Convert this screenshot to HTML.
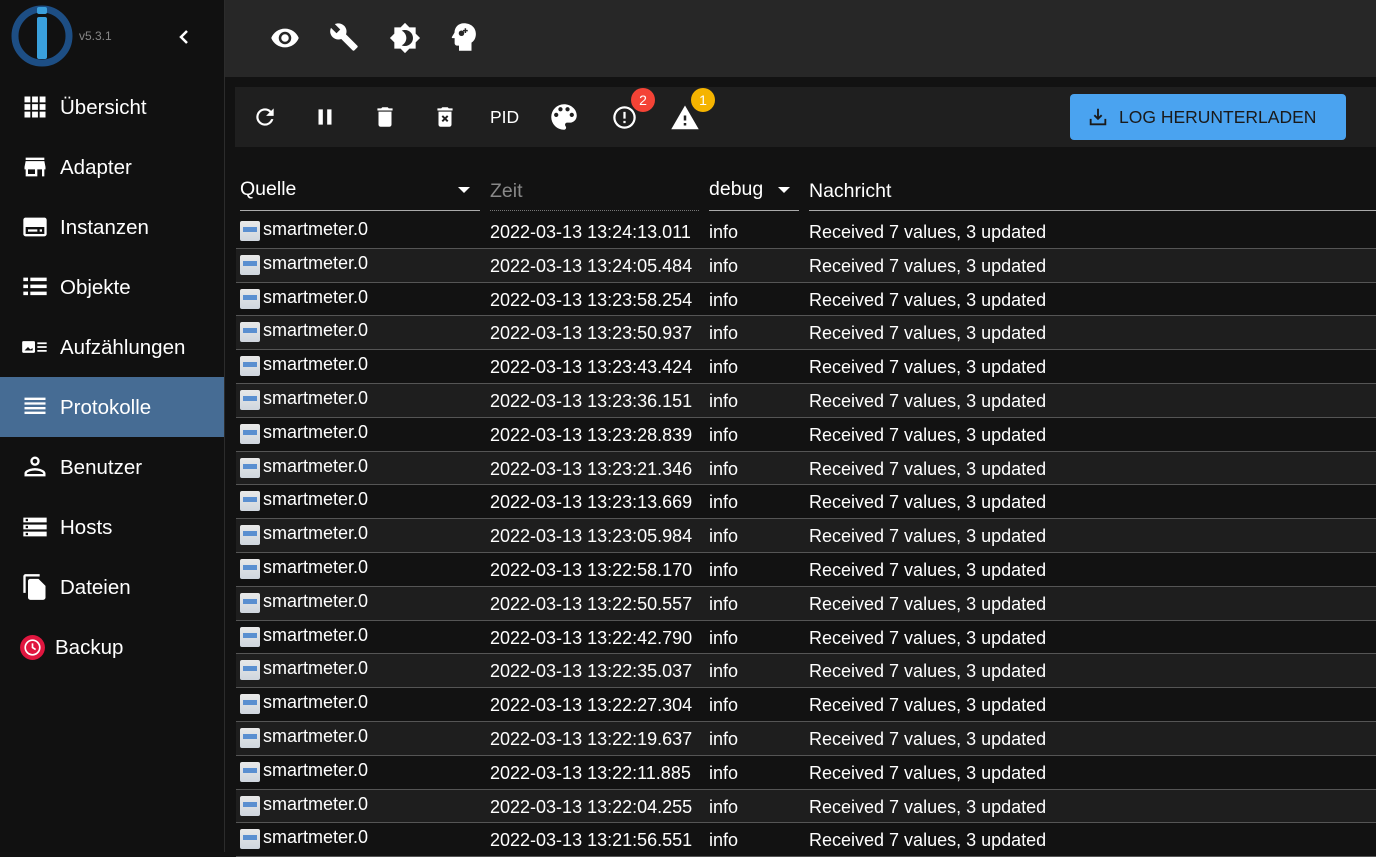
<!DOCTYPE html>
<html><head><meta charset="utf-8"><style>
*{margin:0;padding:0;box-sizing:border-box}
body{width:1376px;height:852px;overflow:hidden;background:#121212;font-family:"Liberation Sans",Arial,sans-serif;color:#fff;position:relative}
.side{position:absolute;left:0;top:0;width:225px;height:852px;background:#111;border-right:1px solid #2c2c2c}
.item{position:absolute;left:0;width:224px;height:60px;display:flex;align-items:center;font-size:20.5px}
.item svg{position:absolute;left:21px}
.item span{position:absolute;left:60px;top:19px}
.active{background:#466c94}
.top{position:absolute;left:225px;top:0;width:1151px;height:77px;background:#272727}
.tb{position:absolute;left:235px;top:87px;width:1141px;height:60px;background:#1f1f1f}
.ic{position:absolute}
.badge{position:absolute;width:24px;height:24px;border-radius:12px;font-size:14px;text-align:center;line-height:24px;color:#fff}
.btn{position:absolute;left:1070px;top:94px;width:276px;height:46px;background:#4aa3f0;border-radius:4px;color:#1a1a1a;font-size:17.5px;display:flex;align-items:center}
.hdr{position:absolute;top:178px;font-size:19.5px}
.ln{position:absolute;top:210px;height:1px;background:#aaa}
.row{position:absolute;left:236px;width:1140px;border-bottom:1px solid #555;font-size:18px}
.row div{position:absolute;top:7px}
.ico{position:absolute;left:4px;top:6px;width:20px;height:20px;background:linear-gradient(#e8e8e8,#cfd6de);border-radius:2px}
.ico:after{content:"";position:absolute;left:3px;top:6px;width:14px;height:5px;background:#5a8fd0}
</style></head><body>
<div class="side">
 <svg class="ic" style="left:10px;top:4px" width="64" height="64" viewBox="0 0 64 64"><circle cx="32" cy="32" r="27" fill="none" stroke="#1d4e84" stroke-width="7"/><rect x="27" y="3" width="10" height="7" rx="2" fill="#3aa0dc"/><rect x="27" y="13" width="10" height="42" rx="2" fill="#3aa0dc"/></svg>
 <div style="position:absolute;left:79px;top:29px;font-size:12px;color:#888">v5.3.1</div>
 <svg class="ic" style="left:176px;top:28px" width="16" height="18" viewBox="0 0 16 18"><path d="M11 3 L5 9 L11 15" stroke="#fff" stroke-width="2.5" fill="none"/></svg>
 <div class="item" style="top:77px"><svg width="28" height="28" viewBox="0 0 24 24" fill="#fff"><path d="M3 3h5v5H3zm6.5 0h5v5h-5zM16 3h5v5h-5zM3 9.5h5v5H3zm6.5 0h5v5h-5zm6.5 0h5v5h-5zM3 16h5v5H3zm6.5 0h5v5h-5zm6.5 0h5v5h-5z"/></svg><span>Übersicht</span></div>
 <div class="item" style="top:137px"><svg width="28" height="28" viewBox="0 0 24 24" fill="#fff"><path d="M20 4H4v2h16zm1 10v-2l-1-5H4l-1 5v2h1v6h10v-6h4v6h2v-6zm-9 4H6v-4h6z"/></svg><span>Adapter</span></div>
 <div class="item" style="top:197px"><svg width="28" height="28" viewBox="0 0 24 24" fill="#fff"><path d="M20 4H4c-1.1 0-2 .9-2 2v12c0 1.1.9 2 2 2h16c1.1 0 2-.9 2-2V6c0-1.1-.9-2-2-2zm0 14H4v-6h16zM6 14h8v2H6zm10 0h2v2h-2z"/></svg><span>Instanzen</span></div>
 <div class="item" style="top:257px"><svg width="28" height="28" viewBox="0 0 24 24" fill="#fff"><path d="M2 4h4v3H2zm0 6h4v3H2zm0 6h4v3H2zM8 4h14v3H8zm0 6h14v3H8zm0 6h14v3H8z"/></svg><span>Objekte</span></div>
 <div class="item" style="top:317px"><svg width="28" height="28" viewBox="0 0 24 24" fill="#fff"><rect x="1" y="7" width="11" height="10" rx="1"/><path d="M14 8h8v1.5h-8zm0 3.3h8v1.5h-8zm0 3.3h8v1.5h-8z"/><path d="M3 15l3-3 2 2 2-1v2z" fill="#111"/></svg><span>Aufzählungen</span></div>
 <div class="item active" style="top:377px"><svg width="28" height="28" viewBox="0 0 24 24" fill="#fff"><path d="M3 4h18v2H3zm0 4h18v2H3zm0 4h18v2H3zm0 4h18v2H3z"/></svg><span>Protokolle</span></div>
 <div class="item" style="top:437px"><svg width="28" height="28" viewBox="0 0 24 24" fill="#fff"><path d="M12 3a4 4 0 1 1 0 8 4 4 0 0 1 0-8zm0 2a2 2 0 1 0 0 4 2 2 0 0 0 0-4zm0 8c2.7 0 9 1.3 9 4.5V20H3v-2.5C3 14.3 9.3 13 12 13zm0 2c-3 0-6.8 1.3-7 2.5V18h14v-.5c-.2-1.2-4-2.5-7-2.5z"/></svg><span>Benutzer</span></div>
 <div class="item" style="top:497px"><svg width="28" height="28" viewBox="0 0 24 24" fill="#fff"><path d="M2 20h20v-4H2zm2-3h2v2H4zM2 4v4h20V4zm4 3H4V5h2zm-4 7h20v-4H2zm2-3h2v2H4z"/></svg><span>Hosts</span></div>
 <div class="item" style="top:557px"><svg width="28" height="28" viewBox="0 0 24 24" fill="#fff"><path d="M16 1H4c-1.1 0-2 .9-2 2v14h2V3h12zm-1 4l6 6v10c0 1.1-.9 2-2 2H8c-1.1 0-2-.9-2-2V7c0-1.1.9-2 2-2z"/></svg><span>Dateien</span></div>
 <div class="item" style="top:617px"><svg style="left:19px" width="27" height="27" viewBox="0 0 26 26"><circle cx="13" cy="13" r="12" fill="#e0163f"/><circle cx="13" cy="13" r="7" fill="none" stroke="#fff" stroke-width="1.6"/><path d="M13 9v4l3 2" stroke="#fff" stroke-width="1.6" fill="none"/></svg><span style="left:55px">Backup</span></div>
</div>
<div class="top">
 <svg class="ic" style="left:45px;top:23px" width="30" height="30" viewBox="0 0 24 24" fill="#fff"><path d="M12 4.5C7 4.5 2.7 7.6 1 12c1.7 4.4 6 7.5 11 7.5s9.3-3.1 11-7.5c-1.7-4.4-6-7.5-11-7.5zM12 17a5 5 0 1 1 0-10 5 5 0 0 1 0 10zm0-8a3 3 0 1 0 0 6 3 3 0 0 0 0-6z"/></svg>
 <svg class="ic" style="left:104px;top:22px" width="30" height="30" viewBox="0 0 24 24" fill="#fff"><path d="M22.7 19l-9.1-9.1c.9-2.3.4-5-1.5-6.9-2-2-5-2.4-7.4-1.3L9 6 6 9 1.6 4.7C.4 7.1.9 10.1 2.9 12.1c1.9 1.9 4.6 2.4 6.9 1.5l9.1 9.1c.4.4 1 .4 1.4 0l2.3-2.3c.5-.4.5-1.1.1-1.4z"/></svg>
 <svg class="ic" style="left:164px;top:22px" width="32" height="32" viewBox="0 0 24 24" fill="#fff"><path d="M20 8.7V4h-4.7L12 .7 8.7 4H4v4.7L.7 12 4 15.3V20h4.7l3.3 3.3 3.3-3.3H20v-4.7l3.3-3.3zM12 18c-.9 0-1.7-.2-2.5-.5C11.6 16.5 13 14.4 13 12s-1.4-4.5-3.5-5.5C10.3 6.2 11.1 6 12 6c3.3 0 6 2.7 6 6s-2.7 6-6 6z"/></svg>
 <svg class="ic" style="left:226px;top:22px" width="26" height="30" viewBox="0 0 20 24" fill="#fff"><path d="M10 1C5.5 1 2.5 4.2 2.4 8.5L.3 12c-.2.4 0 .9.5.9H2.5v4c0 1.1.9 2 2 2H6V23h10v-6.5c2.4-1.5 3.5-4 3.5-7C19.5 4.5 15.5 1 10 1z"/><circle cx="8" cy="9" r="2.2" fill="#272727"/><path d="M10.5 5h1.2v1.3H13v1.2h-1.3v1.3h-1.2V7.5H9.2V6.3h1.3z" fill="#272727"/></svg>
</div>
<div class="tb">
 <svg class="ic" style="left:17px;top:17px" width="26" height="26" viewBox="0 0 24 24" fill="#fff"><path d="M17.65 6.35A7.96 7.96 0 0 0 12 4a8 8 0 1 0 7.73 10h-2.08A6 6 0 1 1 12 6c1.66 0 3.14.69 4.22 1.78L13 11h7V4z"/></svg>
 <svg class="ic" style="left:77px;top:17px" width="26" height="26" viewBox="0 0 24 24" fill="#fff"><path d="M6 19h4V5H6zm8-14v14h4V5z"/></svg>
 <svg class="ic" style="left:137px;top:17px" width="26" height="26" viewBox="0 0 24 24" fill="#fff"><path d="M6 19c0 1.1.9 2 2 2h8c1.1 0 2-.9 2-2V7H6zM19 4h-3.5l-1-1h-5l-1 1H5v2h14z"/></svg>
 <svg class="ic" style="left:197px;top:17px" width="26" height="26" viewBox="0 0 24 24" fill="#fff"><path d="M6 19c0 1.1.9 2 2 2h8c1.1 0 2-.9 2-2V7H6zM19 4h-3.5l-1-1h-5l-1 1H5v2h14z"/><path d="M9.5 11l5 5m0-5l-5 5" stroke="#1f1f1f" stroke-width="1.8"/></svg>
 <div style="position:absolute;left:255px;top:20px;font-size:17.5px">PID</div>
 <svg class="ic" style="left:312px;top:13px" width="34" height="34" viewBox="0 0 24 24" fill="#fff"><path d="M12 3a9 9 0 0 0 0 18c.83 0 1.5-.67 1.5-1.5 0-.39-.15-.74-.39-1.01-.23-.26-.38-.61-.38-.99 0-.83.67-1.5 1.5-1.5H16c2.76 0 5-2.24 5-5 0-4.42-4.03-8-9-8zm-5.5 9a1.5 1.5 0 1 1 0-3 1.5 1.5 0 0 1 0 3zm3-4a1.5 1.5 0 1 1 0-3 1.5 1.5 0 0 1 0 3zm5 0a1.5 1.5 0 1 1 0-3 1.5 1.5 0 0 1 0 3zm3 4a1.5 1.5 0 1 1 0-3 1.5 1.5 0 0 1 0 3z"/></svg>
 <svg class="ic" style="left:376px;top:17px" width="27" height="27" viewBox="0 0 24 24" fill="#fff"><path d="M11 15h2v2h-2zm0-8h2v6h-2zm1-5a10 10 0 1 0 0 20 10 10 0 0 0 0-20zm0 18a8 8 0 1 1 0-16 8 8 0 0 1 0 16z"/></svg>
 <div class="badge" style="left:396px;top:1px;background:#f44336">2</div>
 <svg class="ic" style="left:435px;top:16px" width="30" height="30" viewBox="0 0 24 24" fill="#fff"><path d="M1 21h22L12 2zm12-3h-2v-2h2zm0-4h-2v-4h2z"/></svg>
 <div class="badge" style="left:456px;top:1px;background:#f5b400">1</div>
</div>
<div class="btn"><svg style="margin-left:17px" width="22" height="22" viewBox="0 0 24 24" fill="none" stroke="#1a1a1a" stroke-width="2"><path d="M12 3v11m-4-4l4 4 4-4M4 14v6h16v-6"/></svg><span style="margin-left:10px">LOG HERUNTERLADEN</span></div>
<div class="hdr" style="left:240px">Quelle</div>
<svg class="ic" style="left:458px;top:187px" width="12" height="7"><path d="M0 0h12L6 6z" fill="#fff"/></svg>
<div class="hdr" style="left:490px;top:180px;color:#888">Zeit</div>
<div class="hdr" style="left:709px">debug</div>
<svg class="ic" style="left:778px;top:187px" width="12" height="7"><path d="M0 0h12L6 6z" fill="#fff"/></svg>
<div class="hdr" style="left:809px;top:180px">Nachricht</div>
<div class="ln" style="left:240px;width:240px"></div>
<div class="ln" style="left:490px;width:209px;background:none;border-top:1px dotted #777"></div>
<div class="ln" style="left:709px;width:90px"></div>
<div class="ln" style="left:809px;width:567px"></div>
<div id="rows"></div>
<script>
var t=["13:24:13.011","13:24:05.484","13:23:58.254","13:23:50.937","13:23:43.424","13:23:36.151","13:23:28.839","13:23:21.346","13:23:13.669","13:23:05.984","13:22:58.170","13:22:50.557","13:22:42.790","13:22:35.037","13:22:27.304","13:22:19.637","13:22:11.885","13:22:04.255","13:21:56.551"];
var h="";for(var i=0;i<t.length;i++){var y=Math.round(215+i*33.8),y2=Math.round(215+(i+1)*33.8);h+='<div class="row" style="top:'+y+'px;height:'+(y2-y)+'px;background:'+(i%2?'#1e1e1e':'#121212')+'"><span class="ico"></span><div style="left:27px;top:4px">smartmeter.0</div><div style="left:254px">2022-03-13 '+t[i]+'</div><div style="left:473px">info</div><div style="left:573px">Received 7 values, 3 updated</div></div>';}
document.getElementById("rows").innerHTML=h;
</script>
</body></html>
